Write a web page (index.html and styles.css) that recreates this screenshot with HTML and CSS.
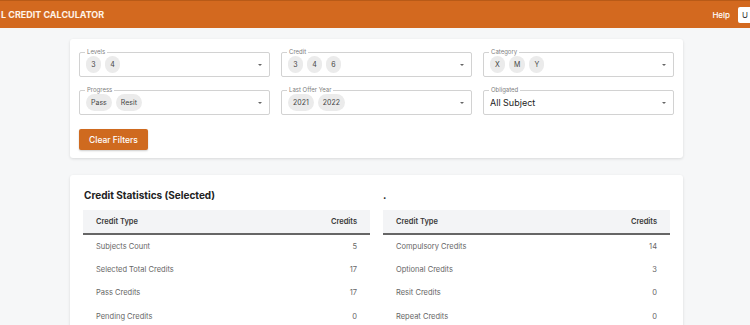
FILE: index.html
```html
<!DOCTYPE html>
<html lang="en">
<head>
    <meta charset="UTF-8">
    <meta name="viewport" content="width=device-width, initial-scale=1.0">
    <title>Credit Calculator</title>
    <link rel="stylesheet" href="styles.css">
</head>
<body>
    <header class="topbar">
        <div class="brand">L CREDIT CALCULATOR</div>
        <div class="topActions">
            <span class="helpLink">Help</span>
            <button class="userButton">U</button>
        </div>
    </header>

    <main class="page">
        <section class="card filters">
            <div class="filterGrid">
                <div class="field">
                    <span class="fieldLabel">Levels</span>
                    <div class="chips"><span class="chip">3</span><span class="chip">4</span></div>
                    <span class="caret"></span>
                </div>
                <div class="field">
                    <span class="fieldLabel">Credit</span>
                    <div class="chips"><span class="chip">3</span><span class="chip">4</span><span class="chip">6</span></div>
                    <span class="caret"></span>
                </div>
                <div class="field">
                    <span class="fieldLabel">Category</span>
                    <div class="chips"><span class="chip">X</span><span class="chip">M</span><span class="chip">Y</span></div>
                    <span class="caret"></span>
                </div>
                <div class="field">
                    <span class="fieldLabel">Progress</span>
                    <div class="chips"><span class="chip">Pass</span><span class="chip">Resit</span></div>
                    <span class="caret"></span>
                </div>
                <div class="field">
                    <span class="fieldLabel">Last Offer Year</span>
                    <div class="chips"><span class="chip">2021</span><span class="chip">2022</span></div>
                    <span class="caret"></span>
                </div>
                <div class="field">
                    <span class="fieldLabel">Obligated</span>
                    <div class="selectValue">All Subject</div>
                    <span class="caret"></span>
                </div>
            </div>
            <button class="clearButton">Clear Filters</button>
        </section>

        <section class="card stats">
            <div class="statsCol">
                <h2 class="statsTitle">Credit Statistics (Selected)</h2>
                <table class="statsTable">
                    <thead>
                        <tr><th>Credit Type</th><th class="num">Credits</th></tr>
                    </thead>
                    <tbody>
                        <tr><td>Subjects Count</td><td class="num">5</td></tr>
                        <tr><td>Selected Total Credits</td><td class="num">17</td></tr>
                        <tr><td>Pass Credits</td><td class="num">17</td></tr>
                        <tr><td>Pending Credits</td><td class="num">0</td></tr>
                    </tbody>
                </table>
            </div>
            <div class="statsCol">
                <h2 class="statsTitle dot">.</h2>
                <table class="statsTable">
                    <thead>
                        <tr><th>Credit Type</th><th class="num">Credits</th></tr>
                    </thead>
                    <tbody>
                        <tr><td>Compulsory Credits</td><td class="num">14</td></tr>
                        <tr><td>Optional Credits</td><td class="num">3</td></tr>
                        <tr><td>Resit Credits</td><td class="num">0</td></tr>
                        <tr><td>Repeat Credits</td><td class="num">0</td></tr>
                    </tbody>
                </table>
            </div>
        </section>
    </main>
</body>
</html>
```

FILE: styles.css
```css
* {
    margin: 0;
    padding: 0;
    box-sizing: border-box;
}

body {
    font-family: Inter, "Liberation Sans", sans-serif;
    background-color: #f6f7f8;
    color: #222;
    overflow: hidden;
    width: 750px;
}

.topbar {
    height: 28px;
    background-color: #d3691f;
    display: flex;
    align-items: center;
    justify-content: space-between;
    overflow: hidden;
    border-top: 1px solid #b85a17;
}

.brand {
    color: #fff3e8;
    font-weight: 700;
    font-size: 9px;
    padding-left: 1px;
}

.topActions {
    display: flex;
    align-items: center;
    gap: 8px;
    margin-right: -4px;
}

.helpLink {
    color: #fff;
    font-size: 8px;
    font-weight: 500;
}

.userButton {
    background: #fff;
    border: none;
    border-radius: 2px;
    height: 16px;
    width: 16px;
    padding: 0 0 0 4px;
    text-align: left;
    font-family: inherit;
    font-size: 8px;
    color: #333;
}

.page {
    padding: 11px 67px 0 70px;
    display: flex;
    flex-direction: column;
    gap: 17px;
}

.card {
    background: #fff;
    border-radius: 3px;
    box-shadow: 0 1px 3px rgba(0, 0, 0, 0.12);
}

.filters {
    padding: 13px 9px 8px 9px;
}

.filterGrid {
    display: grid;
    grid-template-columns: repeat(3, 1fr);
    column-gap: 11px;
    row-gap: 13px;
}

.field {
    position: relative;
    height: 25px;
    border: 1px solid #d2d2d2;
    border-radius: 2px;
    display: flex;
    align-items: center;
    padding: 0 20px 0 6px;
}

.fieldLabel {
    position: absolute;
    top: -5px;
    left: 5px;
    background: #fff;
    padding: 0 2px;
    font-size: 6px;
    line-height: 8px;
    color: #808080;
}

.chips {
    display: flex;
    gap: 4px;
}

.chip {
    background: #ebebeb;
    border-radius: 9px;
    height: 17px;
    min-width: 15px;
    padding: 0 5px;
    font-size: 7px;
    line-height: 17px;
    color: #444;
    text-align: center;
}

.selectValue {
    font-size: 9px;
    color: #222;
}

.caret {
    position: absolute;
    right: 7px;
    top: 11px;
    width: 0;
    height: 0;
    border-left: 2.5px solid transparent;
    border-right: 2.5px solid transparent;
    border-top: 2.5px solid #666;
}

.clearButton {
    margin-top: 14px;
    background: #cf6a1f;
    color: #fff;
    border: none;
    border-radius: 2px;
    height: 21px;
    padding: 0 10px;
    font-family: inherit;
    font-size: 8.5px;
    font-weight: 500;
    box-shadow: 0 1px 2px rgba(0, 0, 0, 0.2);
}

.stats {
    display: grid;
    grid-template-columns: 1fr 1fr;
    column-gap: 13px;
    padding: 13px 13px 0 13px;
    height: 170px;
}

.statsTitle {
    font-size: 10px;
    font-weight: 700;
    color: #222;
    height: 22px;
    line-height: 14px;
    padding-left: 1px;
}

.statsTitle.dot {
    padding-left: 0;
}

.statsTable {
    width: 100%;
    border-collapse: collapse;
    font-size: 7.5px;
}

.statsTable th {
    background: #f3f4f6;
    height: 24px;
    text-align: left;
    font-weight: 600;
    color: #3a3a3a;
    padding: 0 13px;
    border-bottom: 2px solid #666;
}

.statsTable td {
    height: 23.5px;
    color: #666;
    padding: 0 13px;
}

.statsTable tbody tr:first-child td {
    padding-top: 1px;
}

.statsTable .num {
    text-align: right;
}
```
